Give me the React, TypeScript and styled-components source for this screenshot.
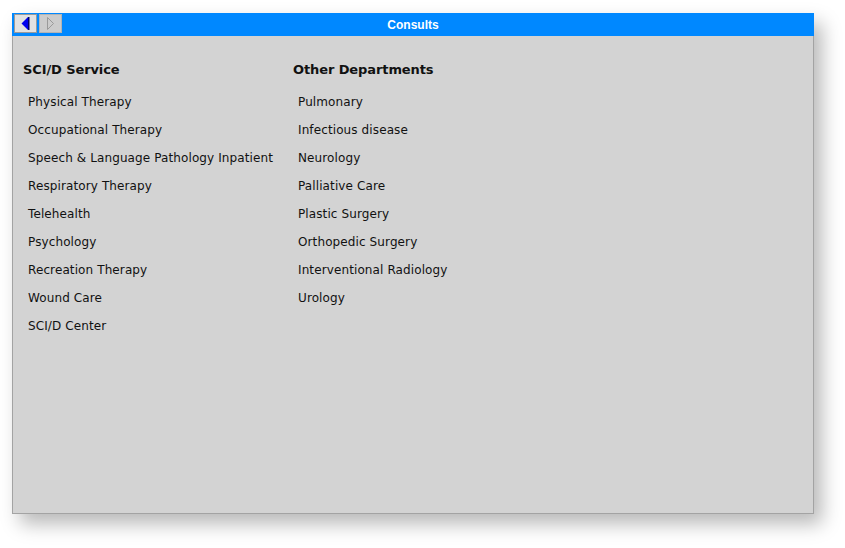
import React from 'react';
import styled, { createGlobalStyle } from 'styled-components';

const GlobalStyle = createGlobalStyle`
    html, body {
        margin: 0;
        padding: 0;
        background: #ffffff;
    }
`;

const Page = styled.div`
    padding: 13px 0 0 12px;
    width: 845px;
    height: 548px;
    box-sizing: border-box;
`;

const Window = styled.div`
    width: 802px;
    height: 501px;
    box-sizing: border-box;
    background-color: #d3d3d3;
    border: 1px solid #a3a3a3;
    border-top: 0;
    box-shadow: 8px 10px 18px rgba(0, 0, 0, 0.28);
    display: flex;
    flex-direction: column;
`;

const TitleBar = styled.div`
    height: 23px;
    margin: 0 -1px;
    background-color: #0088ff;
    position: relative;
    display: flex;
    align-items: center;
    justify-content: center;
`;

const Title = styled.div`
    color: #ffffff;
    font-family: "Liberation Sans", Arial, sans-serif;
    font-weight: bold;
    font-size: 12px;
`;

const NavGroup = styled.div`
    position: absolute;
    left: 2px;
    top: 1px;
    display: flex;
    gap: 2px;
`;

const NavButton = styled.button<{ disabled?: boolean }>`
    width: 23px;
    height: 19px;
    padding: 0;
    margin: 0;
    box-sizing: border-box;
    display: flex;
    align-items: center;
    justify-content: center;
    background-color: ${(props) => (props.disabled ? '#cccccc' : '#e2e2e2')};
    border: 1px solid ${(props) => (props.disabled ? '#b4b4b4' : '#9a9a9a')};
    border-radius: 0;
    outline: 0;
`;

const Content = styled.div`
    display: flex;
    padding: 24px 0 0 10px;
`;

const Column = styled.div`
    width: 270px;
    display: flex;
    flex-direction: column;
`;

const Heading = styled.div`
    font-family: "DejaVu Sans", Verdana, sans-serif;
    font-weight: bold;
    font-size: 13px;
    letter-spacing: -0.1px;
    color: #111111;
    height: 20px;
    line-height: 20px;
    margin-bottom: 8px;
`;

const Item = styled.div`
    font-family: "DejaVu Sans", Verdana, sans-serif;
    font-size: 12px;
    letter-spacing: 0.11px;
    color: #111111;
    padding-left: 5px;
    height: 28px;
    line-height: 28px;
    white-space: nowrap;
`;

const sciServices = [
    'Physical Therapy',
    'Occupational Therapy',
    'Speech & Language Pathology Inpatient',
    'Respiratory Therapy',
    'Telehealth',
    'Psychology',
    'Recreation Therapy',
    'Wound Care',
    'SCI/D Center',
];

const otherDepartments = [
    'Pulmonary',
    'Infectious disease',
    'Neurology',
    'Palliative Care',
    'Plastic Surgery',
    'Orthopedic Surgery',
    'Interventional Radiology',
    'Urology',
];

const App = () => {
    return (
        <>
            <GlobalStyle />
            <Page>
                <Window>
                    <TitleBar>
                        <NavGroup>
                            <NavButton>
                                <svg width="9" height="13" viewBox="0 0 9 13">
                                    <path d="M7 0 L7 13 L0.5 6.5 Z" fill="#0000ee" />
                                    <path d="M7 0 L8.5 0 L8.5 13 L7 13 Z" fill="#000066" />
                                </svg>
                            </NavButton>
                            <NavButton disabled>
                                <svg width="9" height="13" viewBox="0 0 9 13">
                                    <path d="M1.5 0.5 L1.5 12.5 L7.5 6.5 Z" fill="none" stroke="#9a9a9a" strokeWidth="1" />
                                </svg>
                            </NavButton>
                        </NavGroup>
                        <Title>Consults</Title>
                    </TitleBar>
                    <Content>
                        <Column>
                            <Heading>SCI/D Service</Heading>
                            {sciServices.map((name) => (
                                <Item key={name}>{name}</Item>
                            ))}
                        </Column>
                        <Column>
                            <Heading>Other Departments</Heading>
                            {otherDepartments.map((name) => (
                                <Item key={name}>{name}</Item>
                            ))}
                        </Column>
                    </Content>
                </Window>
            </Page>
        </>
    );
};

export default App;
